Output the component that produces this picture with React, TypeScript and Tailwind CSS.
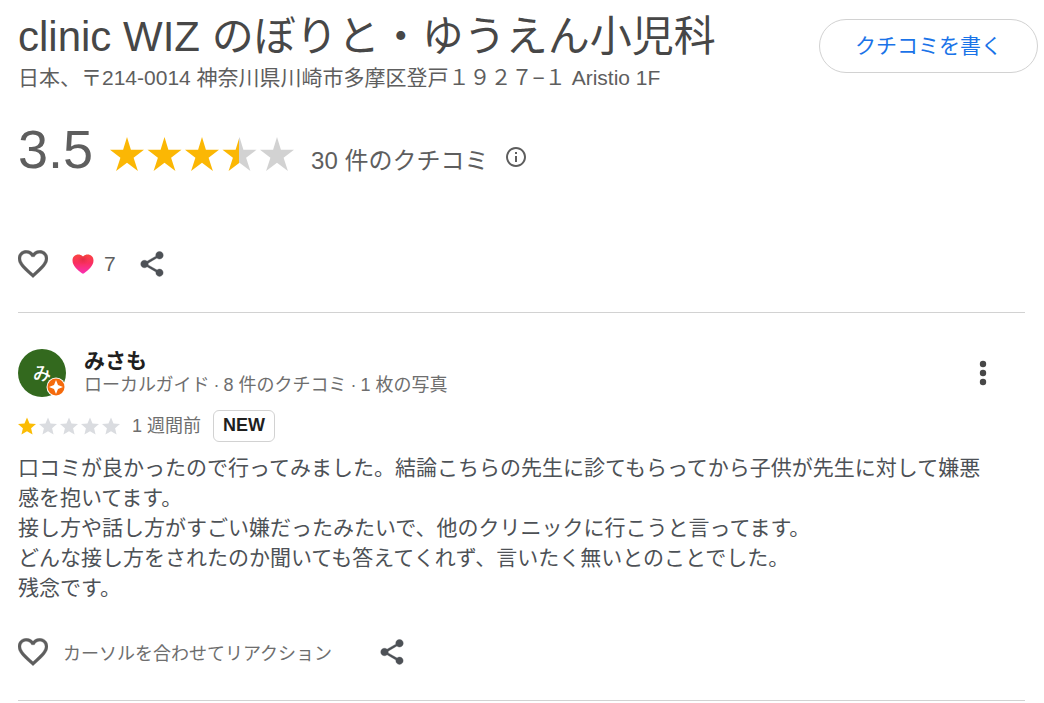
const SMALL_STAR =
  "M12 17.27 18.18 21l-1.64-7.03L22 9.24l-7.19-.61L12 2 9.19 8.63 2 9.24l5.46 4.73L5.82 21z"
const BIG_STAR =
  "M17 0 20.9 12.8H34L23.6 20.8 27.9 34 17 25.8 6.1 34 10.4 20.8 0 12.8H13.1z"
const PINK_HEART =
  "M11 2.600C9.800 1.200 8.300.5 6.300.5 2.900.5.5 3 .5 6.400c0 5.400 5.200 9.600 9.400 12.900.7.5 1.500.5 2.200 0 4.200-3.300 9.400-7.500 9.400-12.900C21.500 3 19.100.5 15.700.5 13.700.5 12.200 1.200 11 2.600z"

const comment = [
  "口コミが良かったので行ってみました。結論こちらの先生に診てもらってから子供が先生に対して嫌悪感を抱いてます。",
  "接し方や話し方がすごい嫌だったみたいで、他のクリニックに行こうと言ってます。",
  "どんな接し方をされたのか聞いても答えてくれず、言いたく無いとのことでした。",
  "残念です。",
]

function HeartIcon() {
  return (
    <svg viewBox="2 3 20 18.35" className="w-[30px] h-7" fill="#5e5e5e" stroke="#5e5e5e" strokeWidth="0.2" aria-hidden="true">
      <path d="M16.5 3c-1.74 0-3.41.81-4.5 2.09C10.91 3.81 9.24 3 7.5 3 4.42 3 2 5.42 2 8.5c0 3.78 3.4 6.86 8.55 11.54L12 21.35l1.45-1.32C18.6 15.36 22 12.28 22 8.5 22 5.42 19.58 3 16.5 3zm-4.4 15.55-.1.1-.1-.1C7.14 14.24 4 11.39 4 8.5 4 6.5 5.5 5 7.5 5c1.54 0 3.04.99 3.57 2.36h1.87C13.46 5.99 14.96 5 16.5 5c2 0 3.5 1.5 3.5 3.5 0 2.89-3.14 5.74-7.9 10.05z" />
    </svg>
  )
}

function ShareIcon() {
  return (
    <svg viewBox="0 0 24 24" className="w-[30px] h-[30px]" fill="#4d5156" stroke="#4d5156" strokeWidth="0.300" aria-hidden="true">
      <path d="M18 16.08c-.76 0-1.44.3-1.96.77L8.91 12.7c.05-.23.09-.46.09-.7s-.04-.47-.09-.7l7.05-4.11c.54.5 1.25.81 2.04.81 1.66 0 3-1.34 3-3s-1.34-3-3-3-3 1.34-3 3c0 .24.04.47.09.7L8.04 9.81C7.5 9.31 6.79 9 6 9c-1.66 0-3 1.34-3 3s1.34 3 3 3c.79 0 1.5-.31 2.04-.81l7.12 4.16c-.05.21-.08.43-.08.65 0 1.61 1.31 2.92 2.92 2.92s2.92-1.31 2.92-2.92-1.31-2.92-2.92-2.92z" />
    </svg>
  )
}

function InfoIcon() {
  return (
    <svg viewBox="0 0 24 24" className="w-6 h-6" fill="#5e5e5e" aria-hidden="true">
      <path d="M11 7h2v2h-2zm0 4h2v6h-2zm1-9C6.48 2 2 6.48 2 12s4.48 10 10 10 10-4.48 10-10S17.52 2 12 2zm0 18c-4.41 0-8-3.59-8-8s3.59-8 8-8 8 3.59 8 8-3.59 8-8 8z" />
    </svg>
  )
}

function PinkHeart() {
  return (
    <svg viewBox="0 0 22 20" className="w-[22px] h-5" aria-hidden="true">
      <defs>
        <linearGradient id="heartFill" x1="0" y1="0" x2="0" y2="1">
          <stop offset="0" stopColor="#fa4540" />
          <stop offset="0.45" stopColor="#f92f60" />
          <stop offset="1" stopColor="#f92fb4" />
        </linearGradient>
        <radialGradient id="heartShade" cx="0.5" cy="0.25" r="0.28">
          <stop offset="0" stopColor="#b8142e" stopOpacity="0.35" />
          <stop offset="1" stopColor="#d01c3c" stopOpacity="0" />
        </radialGradient>
      </defs>
      <path fill="url(#heartFill)" d={PINK_HEART} />
      <path fill="url(#heartShade)" d={PINK_HEART} />
    </svg>
  )
}

function BigStars() {
  return (
    <svg viewBox="0 0 184 34" className="w-[184px] h-[34px]" role="img" aria-label="3.5">
      <defs>
        <linearGradient id="half">
          <stop offset="0.5" stopColor="#fbb704" />
          <stop offset="0.5" stopColor="#d2d2d2" />
        </linearGradient>
      </defs>
      <path d={BIG_STAR} fill="#fbb704" />
      <path d={BIG_STAR} fill="#fbb704" transform="translate(37.5)" />
      <path d={BIG_STAR} fill="#fbb704" transform="translate(75)" />
      <path d={BIG_STAR} fill="url(#half)" transform="translate(112.500)" />
      <path d={BIG_STAR} fill="#d2d2d2" transform="translate(150)" />
    </svg>
  )
}

function SmallStars({ count }: { count: number }) {
  return (
    <div className="flex gap-[3px]" role="img" aria-label={`${count} / 5`}>
      {[1, 2, 3, 4, 5].map((n) => (
        <svg key={n} viewBox="2 2 20 19" className="w-[18px] h-[18px]" fill={n <= count ? "#fbbc04" : "#dadce0"}>
          <path d={SMALL_STAR} />
        </svg>
      ))}
    </div>
  )
}

function Header() {
  return (
    <header className="flex items-start justify-between gap-4 pr-1.5">
      <div>
        <h1 className="text-[42px] leading-[50px] text-[#474747]">clinic WIZ のぼりと・ゆうえん小児科</h1>
        <p className="mt-0.5 text-[21px] leading-7 text-[#5e5e5e]">
          日本、〒214-0014 神奈川県川崎市多摩区登戸１９２７−１ Aristio 1F
        </p>
      </div>
      <button className="mt-[7px] shrink-0 rounded-full border border-[#d2d2d2] px-[35px] py-3 text-[21px] leading-7 text-[#1a73e8]">
        クチコミを書く
      </button>
    </header>
  )
}

function Summary() {
  return (
    <section className="mr-[19px] border-b border-[#d2d2d2] pb-[33px]">
      <div className="mt-[26px] flex items-center text-[#5e5e5e]">
        <span className="text-[54px] leading-[62px]">3.5</span>
        <div className="ml-[17px] mt-2.5">
          <BigStars />
        </div>
        <span className="ml-[17px] mt-6 text-2xl">30 件のクチコミ</span>
        <button className="ml-4 mt-4" aria-label="情報">
          <InfoIcon />
        </button>
      </div>
      <div className="mt-[69px] flex h-[30px] items-center text-[21px] text-[#5e5e5e]">
        <button aria-label="リアクション">
          <HeartIcon />
        </button>
        <button className="ml-6 flex items-center gap-2.5">
          <PinkHeart />
          <span>7</span>
        </button>
        <button className="ml-[21px]" aria-label="共有">
          <ShareIcon />
        </button>
      </div>
    </section>
  )
}

function Avatar() {
  return (
    <div className="relative flex h-12 w-12 items-center justify-center rounded-full bg-[#33691e] pt-0.5 text-lg font-medium text-white">
      み
      <svg viewBox="0 0 20 20" className="absolute right-0 bottom-0 h-5 w-5" aria-hidden="true">
        <circle cx="10" cy="10" r="9.500" fill="#fff" />
        <circle cx="10" cy="10" r="8.500" fill="#f56a0c" />
        <path fill="#fff" d="M10 3 12 8 17 10 12 12 10 17 8 12 3 10 8 8z" />
      </svg>
    </div>
  )
}

function Review() {
  return (
    <article className="mr-[19px] border-b border-[#d2d2d2] pt-9 pb-[33px]">
      <div className="flex items-center">
        <Avatar />
        <div className="ml-[18px] flex-1">
          <h2 className="text-[21px] leading-6 font-bold text-[#1f1f1f]">みさも</h2>
          <p className="flex gap-1 text-lg leading-6 text-[#6e6e6e]">
            <span>ローカルガイド</span>
            <span>·</span>
            <span>8 件のクチコミ</span>
            <span>·</span>
            <span>1 枚の写真</span>
          </p>
        </div>
        <button className="mr-[30px]" aria-label="その他">
          <svg viewBox="0 0 24 30" className="h-[30px] w-6" fill="#474747">
            <circle cx="12" cy="6" r="3.200" />
            <circle cx="12" cy="15" r="3.200" />
            <circle cx="12" cy="24" r="3.200" />
          </svg>
        </button>
      </div>
      <div className="mt-[13px] flex items-center">
        <SmallStars count={1} />
        <span className="ml-3 text-lg text-[#6e6e6e]">1 週間前</span>
        <span className="ml-3 rounded-md border border-[#d2d2d2] px-[9px] pb-0.5 text-lg leading-7 font-bold text-[#1f1f1f]">
          NEW
        </span>
      </div>
      <div className="mt-[11px] pr-8 text-[21px] leading-[30px] text-[#4d5156]">
        {comment.map((line) => (
          <p key={line}>{line}</p>
        ))}
      </div>
      <div className="mt-[34px] flex h-[30px] items-center">
        <button className="flex items-center gap-[15px] text-lg text-[#6e6e6e]">
          <HeartIcon />
          <span className="pt-1">カーソルを合わせてリアクション</span>
        </button>
        <button className="ml-[45px]" aria-label="共有">
          <ShareIcon />
        </button>
      </div>
    </article>
  )
}

export default function App() {
  return (
    <main className="min-h-screen bg-white pt-3 pl-[18px] font-['Liberation_Sans','Noto_Sans_CJK_JP',sans-serif]" lang="ja">
      <Header />
      <Summary />
      <Review />
    </main>
  )
}
